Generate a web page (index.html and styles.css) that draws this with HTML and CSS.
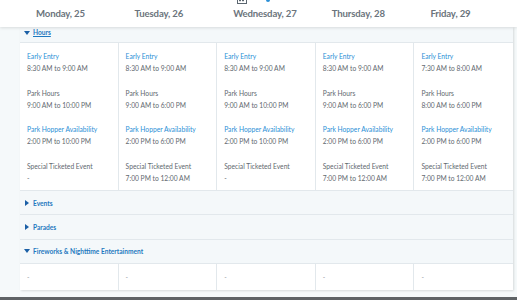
FILE: index.html
```html
<!DOCTYPE html>
<html>
<head>
<meta charset="utf-8">
<link rel="stylesheet" href="styles.css">
</head>
<body>
<div class="page">
  <header class="header">
    <div class="header-top">
      <svg class="cal" width="10" height="4" viewBox="0 0 10 4"><rect x="0.5" y="-3" width="9" height="6.5" fill="none" stroke="#5b6670" stroke-width="1"/><rect x="2" y="0" width="2" height="1.2" fill="#5b6670"/><rect x="5" y="0" width="2" height="1.2" fill="#5b6670"/></svg>
      <span class="dot"></span>
    </div>
    <div class="days">
      <div class="day">Monday, 25</div>
      <div class="day">Tuesday, 26</div>
      <div class="day">Wednesday, 27</div>
      <div class="day">Thursday, 28</div>
      <div class="day">Friday, 29</div>
    </div>
  </header>
  <main class="table">
    <div class="section open"><span class="tri down"></span><span class="sec-title u">Hours</span></div>
    <div class="grid">
      <div class="cell">
        <div class="grp"><div class="lbl blue">Early Entry</div><div class="val">8:30 AM to 9:00 AM</div></div>
        <div class="grp"><div class="lbl">Park Hours</div><div class="val">9:00 AM to 10:00 PM</div></div>
        <div class="grp"><div class="lbl blue">Park Hopper Availability</div><div class="val">2:00 PM to 10:00 PM</div></div>
        <div class="grp"><div class="lbl">Special Ticketed Event</div><div class="val">-</div></div>
      </div>
      <div class="cell">
        <div class="grp"><div class="lbl blue">Early Entry</div><div class="val">8:30 AM to 9:00 AM</div></div>
        <div class="grp"><div class="lbl">Park Hours</div><div class="val">9:00 AM to 6:00 PM</div></div>
        <div class="grp"><div class="lbl blue">Park Hopper Availability</div><div class="val">2:00 PM to 6:00 PM</div></div>
        <div class="grp"><div class="lbl">Special Ticketed Event</div><div class="val">7:00 PM to 12:00 AM</div></div>
      </div>
      <div class="cell">
        <div class="grp"><div class="lbl blue">Early Entry</div><div class="val">8:30 AM to 9:00 AM</div></div>
        <div class="grp"><div class="lbl">Park Hours</div><div class="val">9:00 AM to 10:00 PM</div></div>
        <div class="grp"><div class="lbl blue">Park Hopper Availability</div><div class="val">2:00 PM to 10:00 PM</div></div>
        <div class="grp"><div class="lbl">Special Ticketed Event</div><div class="val">-</div></div>
      </div>
      <div class="cell">
        <div class="grp"><div class="lbl blue">Early Entry</div><div class="val">8:30 AM to 9:00 AM</div></div>
        <div class="grp"><div class="lbl">Park Hours</div><div class="val">9:00 AM to 6:00 PM</div></div>
        <div class="grp"><div class="lbl blue">Park Hopper Availability</div><div class="val">2:00 PM to 6:00 PM</div></div>
        <div class="grp"><div class="lbl">Special Ticketed Event</div><div class="val">7:00 PM to 12:00 AM</div></div>
      </div>
      <div class="cell">
        <div class="grp"><div class="lbl blue">Early Entry</div><div class="val">7:30 AM to 8:00 AM</div></div>
        <div class="grp"><div class="lbl">Park Hours</div><div class="val">8:00 AM to 6:00 PM</div></div>
        <div class="grp"><div class="lbl blue">Park Hopper Availability</div><div class="val">2:00 PM to 6:00 PM</div></div>
        <div class="grp"><div class="lbl">Special Ticketed Event</div><div class="val">7:00 PM to 12:00 AM</div></div>
      </div>
    </div>
    <div class="section"><span class="tri right"></span><span class="sec-title">Events</span></div>
    <div class="section"><span class="tri right"></span><span class="sec-title">Parades</span></div>
    <div class="section"><span class="tri down"></span><span class="sec-title">Fireworks &amp; Nighttime Entertainment</span></div>
    <div class="grid short">
      <div class="cell"><div class="dash">-</div></div>
      <div class="cell"><div class="dash">-</div></div>
      <div class="cell"><div class="dash">-</div></div>
      <div class="cell"><div class="dash">-</div></div>
      <div class="cell"><div class="dash">-</div></div>
    </div>
  </main>
  <div class="spacer"></div>
  <div class="bottom-bar"></div>
</div>
</body>
</html>
```
FILE: styles.css
```css
* { box-sizing: border-box; }
html, body { margin: 0; padding: 0; }
body {
  width: 517px;
  height: 300px;
  overflow: hidden;
  background: #f5f9fa;
  font-family: Lato, "Noto Sans", sans-serif;
  color: #62696f;
}
.page {
  display: flex;
  flex-direction: column;
  height: 300px;
}
.header {
  position: relative;
  z-index: 2;
  background: #fff;
  height: 27px;
  box-shadow: 0 1px 3px rgba(0,0,0,0.12);
  display: flex;
  flex-direction: column;
}
.header-top {
  height: 4px;
  display: flex;
  align-items: flex-start;
  padding-left: 237px;
  gap: 19px;
}
.cal { display: block; }
.dot {
  width: 4px;
  height: 2px;
  background: #2b8fd6;
  border-radius: 0 0 2px 2px;
}
.days {
  display: grid;
  grid-template-columns: repeat(5, 98.6px);
  margin-left: 20px;
  padding-top: 4px;
}
.day {
  padding-left: 16px;
  font-size: 9.6px;
  font-weight: 700;
  color: #6b747c;
  line-height: 12px;
  letter-spacing: -0.15px;
}
.table {
  margin-left: 20px;
  width: 493px;
  background: #fff;
  box-shadow: 1px 1px 2px rgba(0,0,0,0.12);
}
.section {
  background: #f4f8fa;
  border-bottom: 1px solid #e2e8ec;
  display: flex;
  align-items: center;
  padding-left: 4px;
  height: 24.3px;
  font-size: 6.6px;
  font-weight: 700;
  color: #1f78c0;
}
.section.open { height: 16px; align-items: flex-start; padding-top: 1px; }
.section.open .tri { margin-top: 3px; }
.sec-title { margin-left: 3px; }
.sec-title.u { text-decoration: underline; }
.tri { display: inline-block; width: 0; height: 0; }
.tri.down {
  border-left: 3px solid transparent;
  border-right: 3px solid transparent;
  border-top: 4px solid #1b5fa6;
}
.tri.right {
  border-top: 3px solid transparent;
  border-bottom: 3px solid transparent;
  border-left: 4px solid #1b5fa6;
  margin-left: 1px;
  margin-right: 1px;
}
.grid {
  display: grid;
  grid-template-columns: repeat(5, 1fr);
  border-bottom: 1px solid #e2e8ec;
}
.cell {
  border-right: 1px solid #e2e8ec;
  padding: 7px 7px 6px;
  font-size: 6.7px;
  line-height: 12px;
  display: flex;
  flex-direction: column;
  gap: 12.7px;
}
.cell:last-child { border-right: none; }
.lbl { color: #62696f; }
.lbl.blue { color: #2b8fd6; }
.val { color: #62696f; }
.grid.short { border-bottom: none; }
.grid.short .cell { height: 26px; padding-top: 7px; }
.dash { color: #9aa0a5; }
.spacer { flex: 1; }
.bottom-bar { height: 3px; background: #5f6366; }
```
